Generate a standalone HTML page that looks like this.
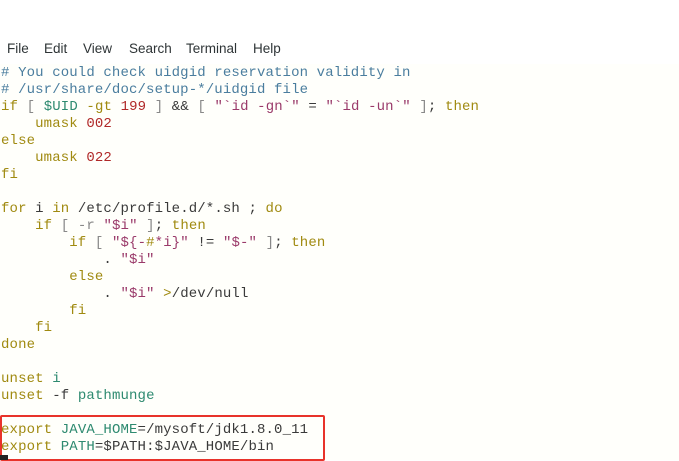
<!DOCTYPE html><html><head><style>
body{margin:0;width:679px;height:460px;overflow:hidden;background:#fff;position:relative;font-family:"Liberation Sans",sans-serif}
.menu span{position:absolute;top:41px;font-size:13.5px;color:#2e3436}
.term{position:absolute;top:64px;left:0;width:679px;height:396px;background:#fffffb}
pre{margin:0;position:absolute;top:65px;left:1px;font-family:"Liberation Mono",monospace;font-size:14px;letter-spacing:0.13px;line-height:17px;color:#3a3a3a}
.c{color:#4a7d9e}.k{color:#a08a10}.n{color:#b02828}.s{color:#9a3a6a}.v{color:#2e8a70}.g{color:#888}
.box{position:absolute;left:0;top:415px;width:325px;height:46px;border:2px solid #e8332a;border-radius:2px;box-sizing:border-box}
.cur{position:absolute;left:0;top:455px;width:8px;height:5px;background:#222}
</style></head><body>
<div class="term"></div>
<div class="menu"><span style="left:7px">File</span><span style="left:44px">Edit</span><span style="left:83px">View</span><span style="left:129px">Search</span><span style="left:186px">Terminal</span><span style="left:253px">Help</span></div>
<pre><span class="c"># You could check uidgid reservation validity in
# /usr/share/doc/setup-*/uidgid file</span>
<span class="k">if</span> <span class="g">[</span> <span class="v">$UID</span> <span class="k">-gt</span> <span class="n">199</span> <span class="g">]</span> &amp;&amp; <span class="g">[</span> <span class="s">"`id -gn`"</span> = <span class="s">"`id -un`"</span> <span class="g">]</span>; <span class="k">then</span>
    <span class="k">umask</span> <span class="n">002</span>
<span class="k">else</span>
    <span class="k">umask</span> <span class="n">022</span>
<span class="k">fi</span>

<span class="k">for</span> i <span class="k">in</span> /etc/profile.d/*.sh ; <span class="k">do</span>
    <span class="k">if</span> <span class="g">[</span> <span class="g">-r</span> <span class="s">"$i"</span> <span class="g">]</span>; <span class="k">then</span>
        <span class="k">if</span> <span class="g">[</span> <span class="s">"${-<span class="k">#</span>*i}"</span> != <span class="s">"$-"</span> <span class="g">]</span>; <span class="k">then</span>
            . <span class="s">"$i"</span>
        <span class="k">else</span>
            . <span class="s">"$i"</span> <span class="k">&gt;</span>/dev/null
        <span class="k">fi</span>
    <span class="k">fi</span>
<span class="k">done</span>

<span class="k">unset</span> <span class="v">i</span>
<span class="k">unset</span> -f <span class="v">pathmunge</span>

<span class="k">export</span> <span class="v">JAVA_HOME</span>=/mysoft/jdk1.8.0_11
<span class="k">export</span> <span class="v">PATH</span>=$PATH:$JAVA_HOME/bin</pre>
<div class="box"></div><div class="cur"></div>
</body></html>
